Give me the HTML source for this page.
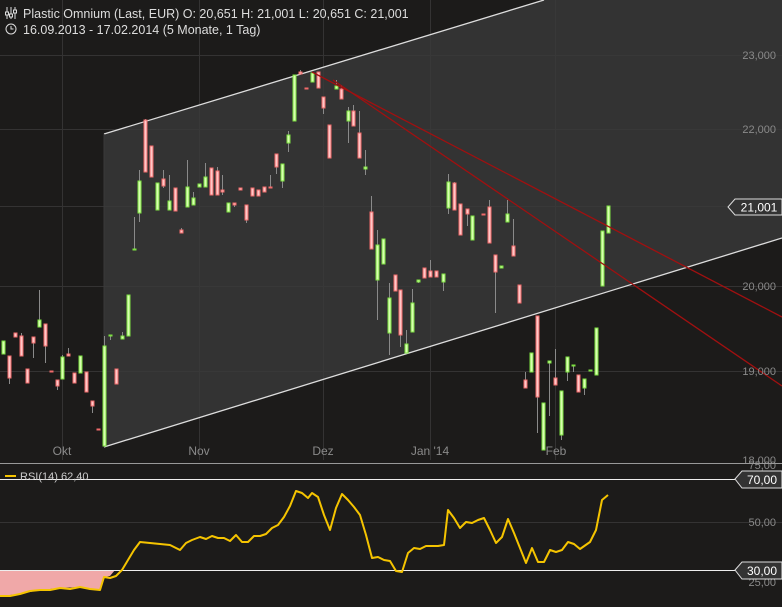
<!DOCTYPE html>
<html><head><meta charset="utf-8"><style>
html,body{margin:0;padding:0;background:#1c1b1a;width:782px;height:607px;overflow:hidden}
svg{display:block}
text{font-family:"Liberation Sans",sans-serif}
</style></head><body>
<svg id="s" width="782" height="607" xmlns="http://www.w3.org/2000/svg">
<rect width="782" height="607" fill="#1c1b1a"/>
<polygon points="104,134 544,0 782,0 782,238 104,447" fill="#333333"/>
<g stroke="#3a3a3a" stroke-width="1" opacity="0.8">
<line x1="0" y1="55.5" x2="782" y2="55.5"/><line x1="0" y1="129.5" x2="782" y2="129.5"/><line x1="0" y1="206.5" x2="782" y2="206.5"/><line x1="0" y1="286.5" x2="782" y2="286.5"/><line x1="0" y1="371.5" x2="782" y2="371.5"/>
<line x1="62.5" y1="0" x2="62.5" y2="460"/><line x1="199.5" y1="0" x2="199.5" y2="460"/><line x1="323.5" y1="0" x2="323.5" y2="460"/><line x1="430.5" y1="0" x2="430.5" y2="460"/><line x1="555.5" y1="0" x2="555.5" y2="460"/>
<line x1="0" y1="522.5" x2="782" y2="522.5"/>
</g>
<line x1="104" y1="134" x2="544" y2="0" stroke="#ddd" stroke-width="1.3"/>
<line x1="104" y1="447" x2="782" y2="238" stroke="#ddd" stroke-width="1.3"/>
<line x1="104" y1="134" x2="104" y2="447" stroke="#3a3a3a"/>
<g id="c"></g>
<line x1="312" y1="72" x2="782" y2="317" stroke="#a01010" stroke-width="1.3"/>
<line x1="333" y1="80" x2="782" y2="386" stroke="#a01010" stroke-width="1.3"/>
<g fill="#8a8a8a" font-size="11" text-anchor="end">
<text x="776" y="59">23,000</text><text x="776" y="133">22,000</text><text x="776" y="290">20,000</text><text x="776" y="375">19,000</text><text x="776" y="464">18,000</text>
<text x="776" y="469">75,00</text><text x="776" y="526">50,00</text><text x="776" y="586">25,00</text>
</g>
<g fill="#8a8a8a" font-size="12" text-anchor="middle">
<text x="62" y="455">Okt</text><text x="199" y="455">Nov</text><text x="323" y="455">Dez</text><text x="430" y="455">Jan '14</text><text x="556" y="455">Feb</text>
</g>
<line x1="0" y1="463.5" x2="782" y2="463.5" stroke="#999"/>
<polygon points="0,570 115,570 110,576 104,577 100,590 80,587 60,588 40,590 20,594 0,596" fill="#f0a8a8"/>
<line x1="0" y1="479.5" x2="735" y2="479.5" stroke="#eee"/>
<line x1="0" y1="570.5" x2="735" y2="570.5" stroke="#eee"/>
<polyline id="rsi" fill="none" stroke="#f5c400" stroke-width="2" stroke-linejoin="round"/>
<path d="M735,479 L742,471 H782 V488 H742 Z" fill="#333" stroke="#ddd"/>
<text x="762" y="484" fill="#fff" font-size="12" text-anchor="middle">70,00</text>
<path d="M735,570 L742,562 H782 V579 H742 Z" fill="#333" stroke="#ddd"/>
<text x="762" y="575" fill="#fff" font-size="12" text-anchor="middle">30,00</text>
<path d="M728,207 L735,199 H782 V215 H735 Z" fill="#333" stroke="#ddd"/>
<text x="759" y="211.5" fill="#fff" font-size="12" text-anchor="middle">21,001</text>
<line x1="5" y1="476" x2="16" y2="476" stroke="#f5c400" stroke-width="2"/>
<text x="20" y="480" fill="#ccc" font-size="11">RSI(14)  62,40</text>
<g stroke="#ddd" stroke-width="1" fill="none">
<line x1="7" y1="7" x2="7" y2="19"/><line x1="11" y1="7" x2="11" y2="19"/><line x1="15" y1="7" x2="15" y2="19"/>
<rect x="5.5" y="12" width="3" height="3" fill="#1c1b1a"/><rect x="9.5" y="14" width="3" height="3" fill="#1c1b1a"/><rect x="13.5" y="10" width="3" height="3" fill="#1c1b1a"/>
<circle cx="11" cy="29" r="5"/><path d="M11,26 V29 H13.5"/>
</g>
<text x="23" y="18" fill="#ddd" font-size="12.5">Plastic Omnium (Last, EUR)  O: 20,651  H: 21,001  L: 20,651  C: 21,001</text>
<text x="23" y="34" fill="#ddd" font-size="12.5">16.09.2013 - 17.02.2014 (5 Monate, 1 Tag)</text>
</svg>
<script>
var d=[[3,341,354,341,354,'g'],[9,356,378,356,384,'r'],[15,333,337,333,337,'r'],[21,336,356,333,356,'r'],[27,369,383,369,383,'r'],[33,337,343,337,358,'r'],[39,320,327,290,327,'g'],[45,324,346,324,363,'r'],[51,371,372,371,372,'r'],[57,380,386,380,390,'r'],[62,357,379,355,379,'g'],[68,354,356,348,356,'r'],[74,373,383,373,383,'r'],[80,356,373,356,373,'g'],[86,372,392,372,392,'r'],[92,401,406,401,413,'r'],[98,429,430,429,430,'r'],[104,346,446,336,446,'g'],[110,335,336,335,340,'g'],[116,369,384,369,384,'r'],[122,336,339,332,339,'g'],[128,295,336,295,336,'g'],[134,249,250,217,250,'g'],[139,181,213,170,222,'g'],[145,120,172,119,172,'r'],[151,146,177,146,177,'r'],[157,183,210,183,210,'g'],[163,179,186,170,188,'r'],[169,201,210,175,210,'g'],[175,188,211,188,211,'r'],[181,230,233,228,233,'r'],[187,187,207,160,207,'g'],[193,198,205,192,205,'g'],[199,184,187,184,187,'g'],[205,177,187,163,187,'g'],[211,168,195,168,195,'r'],[217,171,195,167,195,'r'],[222,190,192,175,195,'r'],[228,203,212,203,212,'g'],[234,203,205,203,207,'r'],[240,188,190,188,190,'r'],[246,205,220,205,223,'r'],[252,188,196,188,196,'r'],[258,190,196,190,196,'r'],[264,187,192,187,192,'r'],[270,187,188,175,188,'r'],[276,154,167,154,174,'r'],[282,164,181,164,188,'g'],[288,135,143,131,152,'g'],[294,75,121,75,121,'g'],[300,72,74,70,74,'r'],[306,88,89,88,89,'r'],[312,73,82,73,82,'g'],[318,72,88,72,88,'r'],[323,97,108,97,114,'r'],[329,125,158,125,158,'r'],[336,86,89,80,89,'g'],[341,89,99,85,99,'r'],[348,111,121,107,143,'g'],[353,111,126,105,126,'r'],[359,133,158,111,158,'r'],[365,167,169,150,175,'g'],[371,212,249,196,249,'r'],[377,245,280,230,320,'g'],[383,239,264,239,264,'g'],[389,298,333,283,355,'g'],[395,275,291,275,291,'r'],[400,290,335,290,347,'r'],[406,344,353,330,353,'g'],[412,303,332,289,332,'g'],[418,280,282,280,283,'g'],[424,268,278,268,278,'r'],[430,271,277,260,277,'r'],[436,271,277,271,277,'r'],[443,274,282,274,291,'g'],[448,182,208,174,214,'g'],[454,183,210,182,210,'r'],[460,204,235,204,235,'r'],[467,209,214,209,226,'r'],[472,216,240,216,240,'g'],[483,214,215,214,215,'r'],[489,207,243,200,243,'r'],[495,255,272,255,313,'r'],[501,266,268,266,268,'g'],[507,214,222,200,222,'g'],[513,246,256,219,256,'r'],[519,285,303,285,303,'r'],[525,380,388,372,388,'r'],[531,353,372,353,372,'g'],[537,316,397,316,433,'r'],[543,403,450,403,450,'g'],[549,361,363,361,416,'g'],[555,378,385,349,385,'r'],[561,391,435,391,440,'g'],[567,357,372,357,381,'g'],[573,365,366,365,372,'g'],[578,375,392,375,392,'r'],[584,379,388,379,395,'g'],[590,370,371,370,371,'g'],[596,328,375,328,375,'g'],[602,231,286,231,286,'g'],[608,206,233,206,233,'g']];
var h='';d.forEach(function(c){var g=c[5]=='g';h+='<line x1="'+(c[0]+.5)+'" y1="'+c[3]+'" x2="'+(c[0]+.5)+'" y2="'+c[4]+'" stroke="#8a8a8a"/>';h+='<rect x="'+(c[0]-1)+'" y="'+c[1]+'" width="3" height="'+Math.max(1,c[2]-c[1])+'" fill="'+(g?'#d8ffb0':'#ffc8c8')+'" stroke="'+(g?'#7ce040':'#f06a6a')+'" stroke-width="1"/>';});
document.getElementById('c').innerHTML=h;
var p=[[0,596],[10,596],[20,594],[30,591],[40,590],[50,590],[60,588],[70,589],[80,587],[90,589],[100,590],[104,577],[110,578],[116,576],[122,570],[128,560],[134,550],[140,542],[150,543],[160,544],[170,545],[180,550],[186,543],[192,540],[200,537],[206,539],[212,536],[218,538],[224,538],[230,541],[236,535],[242,542],[248,542],[254,536],[260,536],[266,534],[272,528],[278,525],[284,517],[290,506],[296,491],[302,493],[308,498],[312,493],[318,497],[324,515],[330,530],[336,508],[342,494],[348,500],[354,507],[360,515],[366,535],[372,558],[378,557],[384,560],[390,561],[396,571],[402,572],[408,553],[414,548],[420,549],[426,546],[432,546],[438,546],[444,545],[448,510],[454,518],[460,528],[466,522],[472,523],[478,520],[484,518],[490,530],[496,543],[502,537],[508,519],[514,533],[520,548],[526,563],[532,548],[538,562],[544,562],[550,550],[556,552],[562,550],[568,542],[574,544],[580,549],[590,542],[596,530],[602,500],[608,495]];
document.getElementById('rsi').setAttribute('points',p.map(function(a){return a.join(',')}).join(' '));
</script>
</body></html>
